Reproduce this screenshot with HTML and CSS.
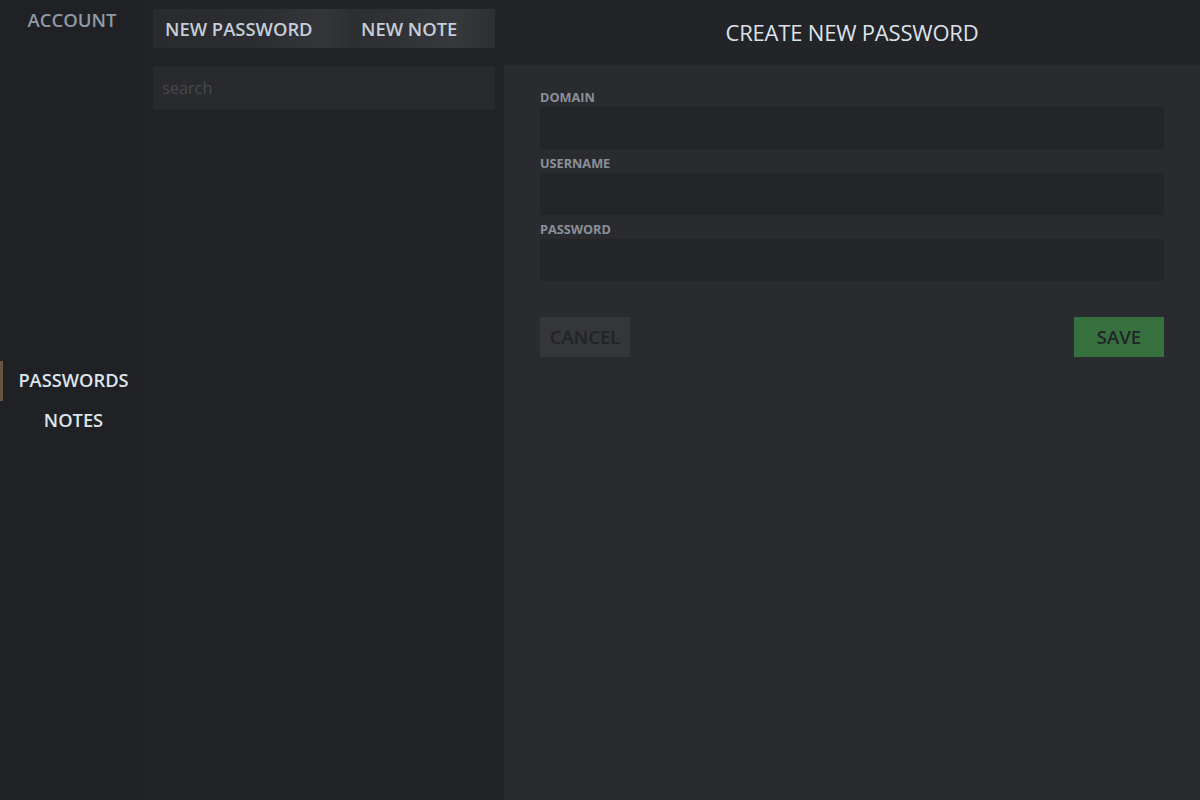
FILE: index.html
```html
<!DOCTYPE html>
<html>
<head>
<meta charset="utf-8">
<link rel="stylesheet" href="styles.css">
</head>
<body>
<div class="app">
  <nav class="sidebar">
    <div class="account">ACCOUNT</div>
    <div class="nav-links">
      <div class="nav-item active">PASSWORDS</div>
      <div class="nav-item">NOTES</div>
    </div>
  </nav>
  <section class="list">
    <div class="tabs">
      <div class="tab">NEW PASSWORD</div>
      <div class="tab">NEW NOTE</div>
    </div>
    <input class="search" type="text" placeholder="search">
  </section>
  <main class="main">
    <header class="main-head">CREATE NEW PASSWORD</header>
    <div class="form-panel">
      <label class="field"><span class="label">DOMAIN</span><input class="input" type="text"></label>
      <label class="field"><span class="label">USERNAME</span><input class="input" type="text"></label>
      <label class="field"><span class="label">PASSWORD</span><input class="input" type="password"></label>
      <div class="actions">
        <button class="btn cancel">CANCEL</button>
        <button class="btn save">SAVE</button>
      </div>
    </div>
  </main>
</div>
</body>
</html>
```
FILE: styles.css
```css
* { box-sizing: border-box; }
html, body { margin: 0; padding: 0; height: 100%; }
body {
  font-family: "Open Sans", "Noto Sans", sans-serif;
  background: #232428;
}
.app {
  display: flex;
  height: 800px;
}
.sidebar {
  width: 144px;
  background: #202124;
  display: flex;
  flex-direction: column;
}
.account {
  color: #8f99a6;
  font-size: 18.5px;
  font-weight: 600;
  text-align: center;
  padding-top: 8px;
  line-height: 24px;
}
.nav-links {
  margin-top: 329px;
  display: flex;
  flex-direction: column;
}
.nav-item {
  height: 40px;
  line-height: 38px;
  padding-bottom: 2px;
  color: #dde4ec;
  font-size: 18.3px;
  font-weight: 600;
  text-align: center;
  padding-left: 3px;
}
.nav-item.active {
  border-left: 3px solid #6a5240;
  padding-left: 0;
}
.list {
  width: 360px;
  background: #232428;
  padding: 9px 9px 0 9px;
  display: flex;
  flex-direction: column;
  gap: 19px;
}
.tabs {
  display: flex;
  height: 39px;
  background: linear-gradient(90deg, #2a2b2f 0%, #2c2d31 30%, #35363a 50%, #2d2e32 58%, #313236 72%, #37383c 88%, #2e2f33 100%);
}
.tab {
  color: #c5cdd8;
  font-size: 18.4px;
  font-weight: 600;
  line-height: 39px;
}
.tab:first-child { width: 177px; padding-left: 12px; }
.tab:last-child { flex: 1; padding-left: 31px; }
.search {
  height: 42px;
  border: none;
  outline: none;
  background: #292a2e;
  color: #c5cdd8;
  font-family: inherit;
  font-size: 16.3px;
  padding: 0 9px;
}
.search::placeholder { color: #48494d; }
.main {
  flex: 1;
  display: flex;
  flex-direction: column;
}
.main-head {
  height: 65px;
  background: #232428;
  color: #dde2ea;
  font-size: 22px;
  text-align: center;
  line-height: 64px;
  letter-spacing: -0.2px;
}
.form-panel {
  flex: 1;
  background: #2a2b2f;
  padding: 24px 36px 0 36px;
  display: flex;
  flex-direction: column;
}
.field {
  display: flex;
  flex-direction: column;
}
.label {
  color: #8a9099;
  font-size: 12.7px;
  font-weight: 700;
  line-height: 16px;
  padding-bottom: 2px;
}
.input {
  height: 42px;
  border: none;
  outline: none;
  background: #242529;
  color: #dde2ea;
  font-family: inherit;
  font-size: 16px;
  padding: 0 10px;
  margin-bottom: 6px;
}
.actions {
  display: flex;
  justify-content: space-between;
  margin-top: 30px;
}
.btn {
  width: 90px;
  height: 40px;
  border: none;
  font-family: inherit;
  font-size: 18.5px;
  font-weight: 600;
  color: #222327;
  padding: 0 0 2px 0;
}
.cancel { background: #35363a; }
.save { background: #35703e; color: #222426; }
```
